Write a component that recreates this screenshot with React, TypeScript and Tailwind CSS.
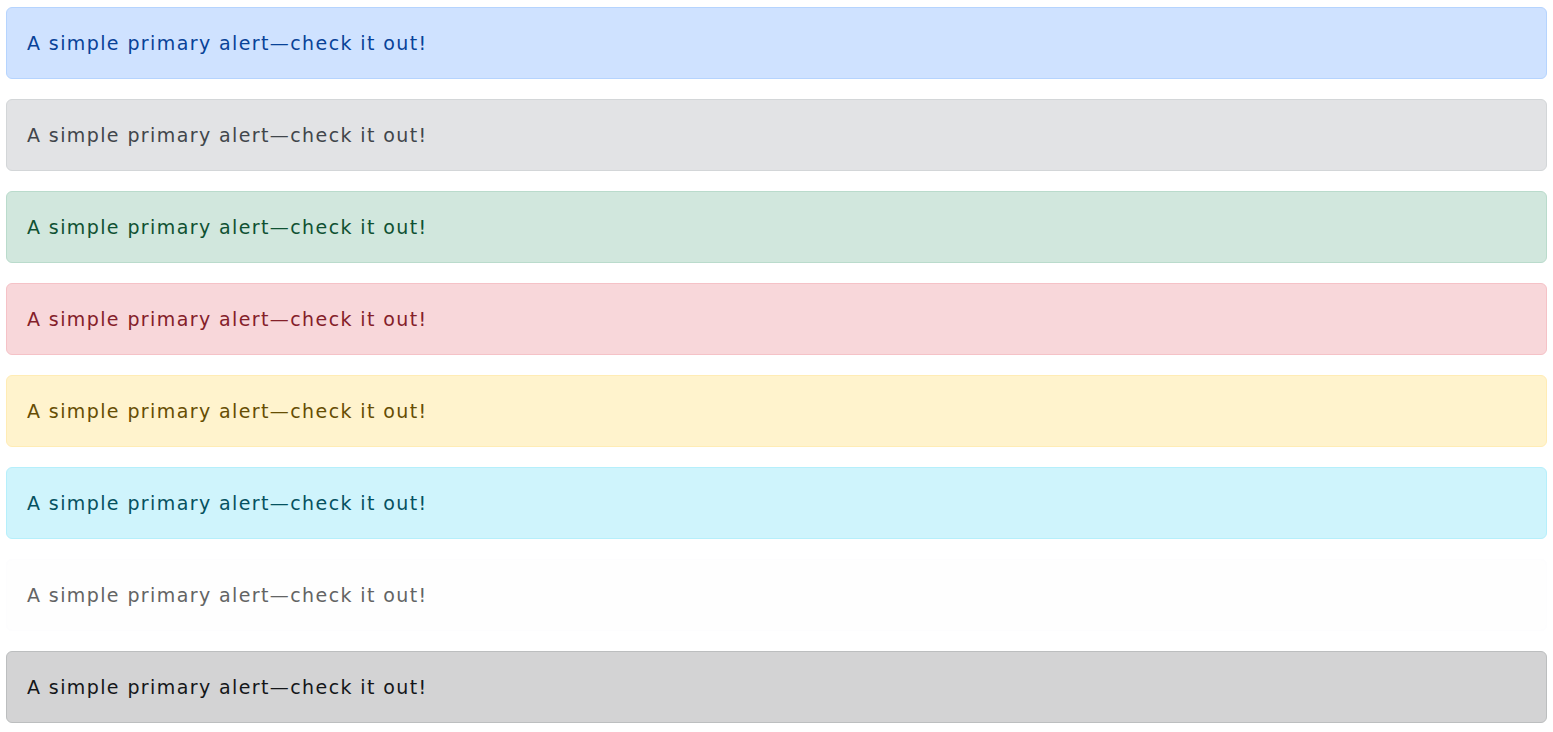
const alerts = [
  { name: "primary", cls: "bg-[#cfe2ff] border-[#b6d4fe] text-[#084298]" },
  { name: "secondary", cls: "bg-[#e2e3e5] border-[#d3d6d8] text-[#41464b]" },
  { name: "success", cls: "bg-[#d1e7dd] border-[#badbcc] text-[#0f5132]" },
  { name: "danger", cls: "bg-[#f8d7da] border-[#f5c2c7] text-[#842029]" },
  { name: "warning", cls: "bg-[#fff3cd] border-[#ffecb5] text-[#664d03]" },
  { name: "info", cls: "bg-[#cff4fc] border-[#b6effb] text-[#055160]" },
  { name: "light", cls: "bg-[#fefefe] border-[#fdfdfe] text-[#636464]" },
  { name: "dark", cls: "bg-[#d3d3d4] border-[#bcbebf] text-[#141619]" },
];

export default function App() {
  return (
    <div className="min-h-screen bg-white px-[6px] pt-[7px] font-['DejaVu_Sans',sans-serif]">
      <div className="flex flex-col gap-5">
        {alerts.map((a) => (
          <div
            key={a.name}
            role="alert"
            className={`flex h-[72px] items-center rounded-md border px-5 text-[19px] tracking-[1.4px] ${a.cls}`}
          >
            A simple primary alert—check it out!
          </div>
        ))}
      </div>
    </div>
  );
}
